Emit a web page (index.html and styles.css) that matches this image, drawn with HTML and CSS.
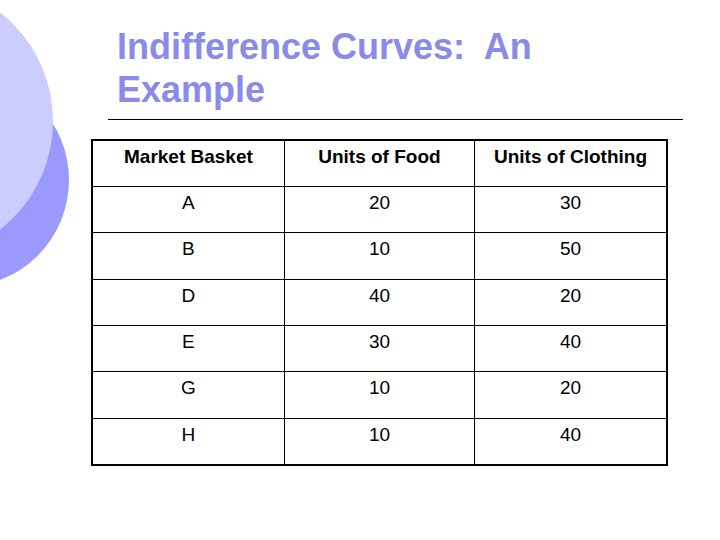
FILE: index.html
```html
<!DOCTYPE html>
<html>
<head>
<meta charset="utf-8">
<link rel="stylesheet" href="styles.css">
</head>
<body>
<div class="slide">
  <div class="deco">
    <div class="circle dark"></div>
    <div class="circle light"></div>
  </div>
  <div class="content">
    <h1 class="title">Indifference Curves:&nbsp; An<br>Example</h1>
    <div class="rule"></div>
    <table class="data">
      <tr class="head"><th>Market Basket</th><th>Units of Food</th><th>Units of Clothing</th></tr>
      <tr><td>A</td><td>20</td><td>30</td></tr>
      <tr><td>B</td><td>10</td><td>50</td></tr>
      <tr><td>D</td><td>40</td><td>20</td></tr>
      <tr><td>E</td><td>30</td><td>40</td></tr>
      <tr><td>G</td><td>10</td><td>20</td></tr>
      <tr><td>H</td><td>10</td><td>40</td></tr>
    </table>
  </div>
</div>
</body>
</html>
```
FILE: styles.css
```css
html, body {
  margin: 0;
  padding: 0;
  background: #ffffff;
}
.slide {
  position: relative;
  width: 720px;
  height: 540px;
  overflow: hidden;
  font-family: "Liberation Sans", Arial, sans-serif;
}
.deco {
  position: absolute;
  left: 0;
  top: 0;
  width: 720px;
  height: 540px;
}
.circle {
  position: absolute;
  border-radius: 50%;
}
.dark {
  left: -145px;
  top: 73px;
  width: 214px;
  height: 214px;
  background: #9999ff;
}
.light {
  left: -223px;
  top: -17px;
  width: 276px;
  height: 276px;
  background: #ccccff;
}
.content {
  position: relative;
  display: flex;
  flex-direction: column;
  padding: 25px 0 0 91px;
}
.title {
  margin: 0 0 0 26px;
  font-size: 36px;
  line-height: 43px;
  font-weight: bold;
  color: #8a8ae8;
}
.rule {
  margin: 8px 0 0 17px;
  width: 575px;
  height: 1px;
  background: #000000;
}
.data {
  margin-top: 19px;
  border-collapse: collapse;
  border: 2px solid #000000;
  width: 577px;
  font-size: 19px;
  color: #000000;
}
.data th, .data td {
  border: 1px solid #000000;
  text-align: center;
  vertical-align: top;
  height: 46.4px;
  padding: 5px 4px 0 4px;
  box-sizing: border-box;
  line-height: 22px;
}
.data th {
  font-weight: bold;
}
.data th:nth-child(1), .data td:nth-child(1) { width: 193px; }
.data th:nth-child(2), .data td:nth-child(2) { width: 191px; }
.data th:nth-child(3), .data td:nth-child(3) { width: 193px; }
```
